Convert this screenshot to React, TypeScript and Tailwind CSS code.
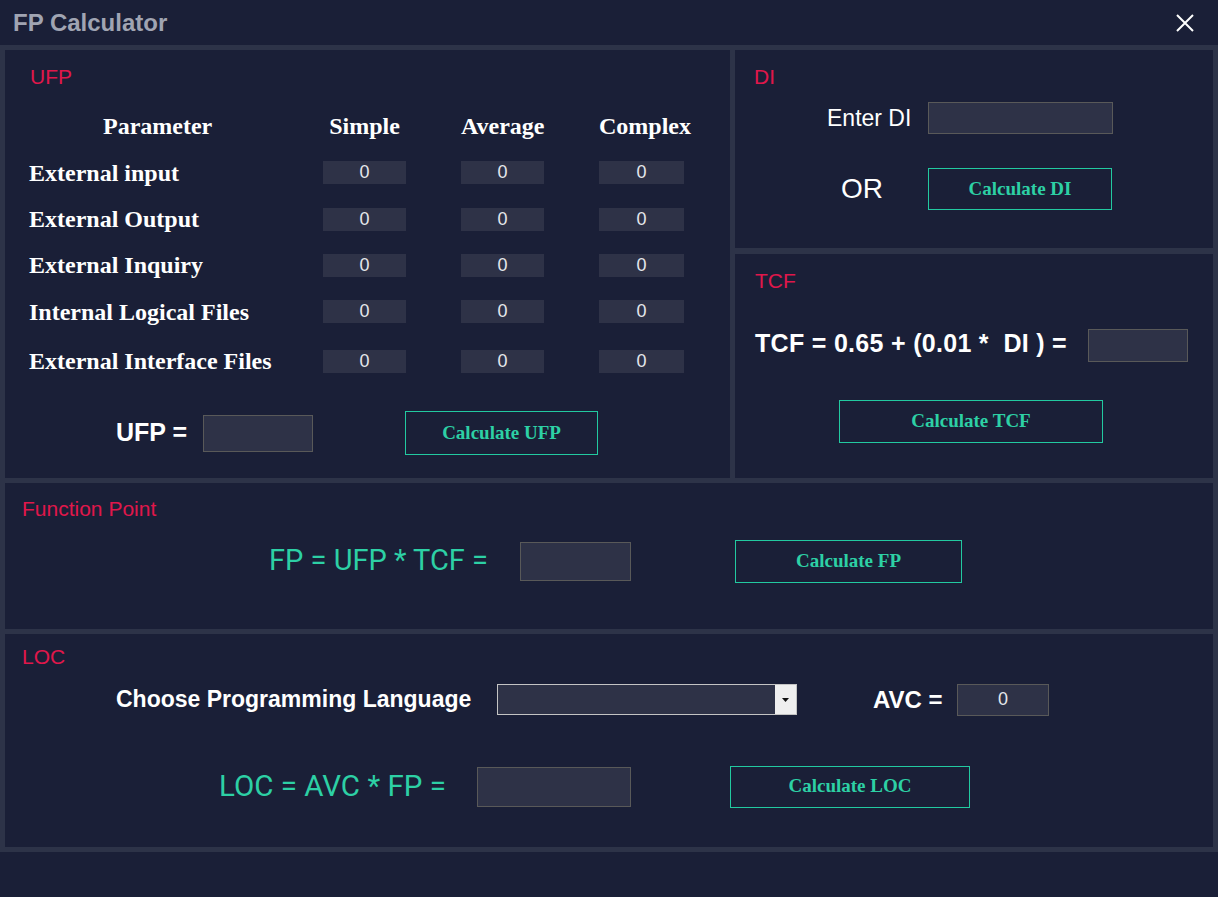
import React from 'react';

const ROWS = [
  'External input',
  'External Output',
  'External Inquiry',
  'Internal Logical Files',
  'External Interface Files',
];

function Title({ children, className = '' }: { children: React.ReactNode; className?: string }) {
  return <div className={`text-[21px] leading-[20px] text-[#e0174b] ${className}`}>{children}</div>;
}

function CalcButton({ label, className = '' }: { label: string; className?: string }) {
  return (
    <button
      className={`border border-[#22c9a0] text-[#2dd0a5] font-bold text-[19px] font-['Liberation_Serif','Times_New_Roman',serif] flex items-center justify-center ${className}`}
    >
      {label}
    </button>
  );
}

function Box({ className = '', value = '' }: { className?: string; value?: string }) {
  return (
    <input
      readOnly
      value={value}
      className={`bg-[#2e3247] border border-[#595959] text-center text-[18px] text-[#e5e7eb] outline-none ${className}`}
    />
  );
}

function UfpPanel() {
  return (
    <section className="w-[725px] bg-[#1a1f37] pt-[17px]">
      <Title className="pl-[25px]">UFP</Title>
      <div className="mt-[16px] pl-[24px] grid grid-cols-[239px_83px_83px_85px] grid-rows-[46px_47px_46px_46px_47px_52px] gap-x-[55px] items-center font-['Liberation_Serif','Times_New_Roman',serif] font-bold text-[24px] text-white">
        <div className="pl-[74px] whitespace-nowrap">Parameter</div>
        <div className="text-center">Simple</div>
        <div className="text-center">Average</div>
        <div className="text-center">Complex</div>
        {ROWS.map(r => (
          <React.Fragment key={r}>
            <div className="whitespace-nowrap">{r}</div>
            {[0, 1, 2].map(i => (
              <input
                key={i}
                readOnly
                value="0"
                className="h-[23px] w-full bg-[#2e3247] text-center font-['Liberation_Sans',Arial,sans-serif] font-normal text-[18px] text-[#e5e7eb] outline-none"
              />
            ))}
          </React.Fragment>
        ))}
      </div>
      <div className="mt-[24px] h-[44px] flex items-center pl-[111px]">
        <span className="w-[87px] text-[25px] font-bold text-white">UFP =</span>
        <Box className="w-[110px] h-[37px]" />
        <CalcButton label="Calculate UFP" className="ml-[92px] w-[193px] h-[44px]" />
      </div>
    </section>
  );
}

function DiPanel() {
  return (
    <section className="h-[198px] bg-[#1a1f37] pt-[17px]">
      <Title className="pl-[19px]">DI</Title>
      <div className="mt-[15px] h-[32px] flex items-center pl-[92px]">
        <span className="w-[101px] text-[23px] text-white">Enter DI</span>
        <Box className="w-[185px] h-[32px]" />
      </div>
      <div className="mt-[34px] h-[42px] flex items-center pl-[106px]">
        <span className="w-[87px] text-[28px] text-white">OR</span>
        <CalcButton label="Calculate DI" className="w-[184px] h-[42px]" />
      </div>
    </section>
  );
}

function TcfPanel() {
  return (
    <section className="flex-1 bg-[#1a1f37] pt-[17px]">
      <Title className="pl-[20px]">TCF</Title>
      <div className="mt-[38px] h-[33px] flex items-center pl-[20px]">
        <span className="w-[333px] text-[25px] leading-[28px] mb-[5px] font-bold text-white whitespace-pre tracking-[0.3px]">TCF = 0.65 + (0.01 *  DI ) =</span>
        <Box className="w-[100px] h-[33px]" />
      </div>
      <div className="mt-[38px] pl-[104px]">
        <CalcButton label="Calculate TCF" className="w-[264px] h-[43px]" />
      </div>
    </section>
  );
}

function FpPanel() {
  return (
    <section className="h-[146px] bg-[#1a1f37] pt-[16px]">
      <Title className="pl-[17px]">Function Point</Title>
      <div className="mt-[20px] h-[44px] flex items-center pl-[264px]">
        <span className="w-[251px] font-['Roboto',sans-serif] text-[29px] text-[#2dd0a5]">FP = UFP * TCF =</span>
        <Box className="w-[111px] h-[39px]" />
        <CalcButton label="Calculate FP" className="ml-[104px] w-[227px] h-[43px]" />
      </div>
    </section>
  );
}

function LocPanel() {
  return (
    <section className="h-[213px] bg-[#1a1f37] pt-[13px]">
      <Title className="pl-[17px]">LOC</Title>
      <div className="mt-[16px] h-[33px] flex items-center pl-[111px]">
        <span className="w-[381px] text-[23px] font-bold text-white">Choose Programming Language</span>
        <div className="w-[300px] h-[31px] flex border border-[#c4c4c4] bg-[#2e3247]">
          <div className="flex-1" />
          <div className="w-[21px] bg-[#efefef] flex items-center justify-center">
            <svg width="7" height="4" viewBox="0 0 7 4">
              <path d="M0 0h7L3.5 4z" fill="#111" />
            </svg>
          </div>
        </div>
        <span className="ml-[76px] w-[84px] text-[24px] font-bold text-white">AVC =</span>
        <Box className="w-[92px] h-[32px]" value="0" />
      </div>
      <div className="mt-[49px] h-[43px] flex items-center pl-[214px]">
        <span className="w-[258px] font-['Roboto',sans-serif] text-[29.5px] text-[#2dd0a5]">LOC = AVC * FP =</span>
        <Box className="w-[154px] h-[40px]" />
        <CalcButton label="Calculate LOC" className="ml-[99px] w-[240px] h-[42px]" />
      </div>
    </section>
  );
}

export default function App() {
  return (
    <div className="w-[1218px] h-[897px] bg-[#1a1f37] font-['Liberation_Sans',Arial,sans-serif] overflow-hidden">
      <header className="h-[45px] flex items-center justify-between pl-[13px] pr-[24px]">
        <h1 className="text-[24px] font-bold text-[#a0a4b2]">FP Calculator</h1>
        <svg width="18" height="18" viewBox="0 0 18 18">
          <path d="M1 1L17 17M17 1L1 17" stroke="#ffffff" strokeWidth="2" />
        </svg>
      </header>
      <div className="bg-[#2d3348] p-[5px] flex flex-col gap-[5px]">
        <div className="h-[428px] flex gap-[5px]">
          <UfpPanel />
          <div className="flex-1 flex flex-col gap-[6px]">
            <DiPanel />
            <TcfPanel />
          </div>
        </div>
        <FpPanel />
        <LocPanel />
      </div>
    </div>
  );
}
